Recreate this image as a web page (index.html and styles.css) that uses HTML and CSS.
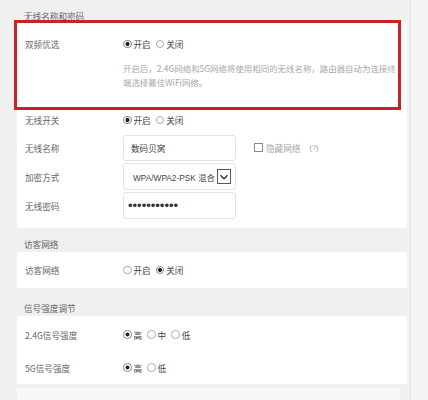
FILE: index.html
```html
<!DOCTYPE html>
<html lang="zh-CN">
<head>
<meta charset="utf-8">
<title>无线设置</title>
<link rel="stylesheet" href="styles.css">
</head>
<body>
<div class="page">
  <div class="main">
    <div class="sec-title first">无线名称和密码</div>
    <div class="card card-wifi">
      <div class="highlight">
        <div class="row row-top">
          <div class="label">双频优选</div>
          <div class="ctrl">
            <label class="opt"><input type="radio" name="dual" checked>开启</label>
            <label class="opt"><input type="radio" name="dual">关闭</label>
          </div>
        </div>
        <p class="desc">开启后，2.4G网络和5G网络将使用相同的无线名称，路由器自动为连接终端选择最佳WiFi网络。</p>
      </div>
      <div class="row h26">
        <div class="label">无线开关</div>
        <div class="ctrl">
          <label class="opt"><input type="radio" name="sw" checked>开启</label>
          <label class="opt"><input type="radio" name="sw">关闭</label>
        </div>
      </div>
      <div class="row h29">
        <div class="label">无线名称</div>
        <div class="ctrl">
          <div class="field">数码贝窝</div>
          <label class="hide"><input type="checkbox" class="chk">隐藏网络</label>
          <span class="help">(?)</span>
        </div>
      </div>
      <div class="row h29">
        <div class="label">加密方式</div>
        <div class="ctrl">
          <div class="field select"><span class="sel-text">WPA/WPA2-PSK 混合</span>
            <span class="arrow"><svg width="12" height="12" viewBox="0 0 12 12"><path d="M2.5 4.2 L6 7.8 L9.5 4.2" fill="none" stroke="#333" stroke-width="1.4"/></svg></span>
          </div>
        </div>
      </div>
      <div class="row h29">
        <div class="label">无线密码</div>
        <div class="ctrl">
          <div class="field pwd">•••••••••••</div>
        </div>
      </div>
    </div>

    <div class="sec-title second">访客网络</div>
    <div class="card">
      <div class="row h36">
        <div class="label">访客网络</div>
        <div class="ctrl">
          <label class="opt"><input type="radio" name="guest">开启</label>
          <label class="opt"><input type="radio" name="guest" checked>关闭</label>
        </div>
      </div>
    </div>

    <div class="sec-title third">信号强度调节</div>
    <div class="card card-signal">
      <div class="row h33">
        <div class="label">2.4G信号强度</div>
        <div class="ctrl">
          <label class="opt"><input type="radio" name="s24" checked>高</label>
          <label class="opt"><input type="radio" name="s24">中</label>
          <label class="opt"><input type="radio" name="s24">低</label>
        </div>
      </div>
      <div class="row h33">
        <div class="label">5G信号强度</div>
        <div class="ctrl">
          <label class="opt"><input type="radio" name="s5" checked>高</label>
          <label class="opt"><input type="radio" name="s5">低</label>
        </div>
      </div>
    </div>
    <div class="next-block"></div>
  </div>
  <div class="rail"></div>
</div>
</body>
</html>
```

FILE: styles.css
```css
html, body {
  margin: 0;
  padding: 0;
}
body {
  background: #f0f0f0;
  font-family: "Noto Sans CJK SC", "Liberation Sans", sans-serif;
  font-size: 8.6px;
  color: #555;
  overflow: hidden;
}
.page {
  display: flex;
  height: 400px;
}
.main {
  width: 390px;
  padding-left: 17px;
  padding-right: 3px;
}
.rail {
  flex: 1;
  background: #f4f4f4;
  border-left: 1px solid #e6e6e6;
}
.sec-title {
  padding-left: 7px;
  line-height: 12px;
  color: #666;
}
.sec-title.first { padding-top: 10px; }
.sec-title.second { padding-top: 10px; padding-bottom: 2px; }
.sec-title.third { padding-top: 14px; padding-bottom: 2px; }
.card {
  background: #fff;
  width: 390px;
}
.card-wifi { padding-bottom: 8px; }
.card-signal { padding-top: 2px; padding-bottom: 0; }
.highlight {
  position: relative;
  padding-top: 16px;
  padding-bottom: 18px;
}
.highlight::after {
  content: "";
  position: absolute;
  left: -3px;
  top: -2px;
  width: 387px;
  height: 90px;
  border: 3px solid #c9212b;
  box-sizing: border-box;
}
.row {
  display: flex;
  align-items: center;
  padding-left: 8px;
}
.row-top { height: 12px; }
.h26 { height: 26px; }
.h29 { height: 29px; }
.h33 { height: 33px; }
.h36 { height: 36px; }
.label {
  width: 98px;
  color: #666;
  white-space: nowrap;
}
.ctrl {
  display: flex;
  align-items: center;
  color: #444;
}
.opt {
  display: flex;
  align-items: center;
  margin-right: 5px;
}
input[type="radio"] {
  appearance: none;
  -webkit-appearance: none;
  width: 8.5px;
  height: 8.5px;
  margin: 0 2px 0 0;
  border: 1px solid #aaa;
  border-radius: 50%;
  background: #fff;
  box-sizing: border-box;
}
input[type="radio"]:checked {
  border-color: #888;
  background: radial-gradient(circle, #222 0, #222 1.7px, #fff 2.3px);
}
.desc {
  margin: 11px 0 0 106px;
  width: 273px;
  line-height: 14px;
  font-size: 8.45px;
  color: #a8a8a8;
}
.field {
  width: 113px;
  height: 26px;
  box-sizing: border-box;
  border: 1px solid #e2e2e2;
  border-radius: 3px;
  display: flex;
  align-items: center;
  padding-left: 7px;
  color: #444;
}
.select {
  padding-left: 9px;
  padding-right: 4px;
  height: 27px;
  font-family: "Liberation Sans", "Noto Sans CJK SC", sans-serif;
  font-size: 8.3px;
}
.sel-text { white-space: nowrap; }
.arrow {
  margin-left: auto;
  width: 14px;
  height: 15px;
  box-sizing: border-box;
  border: 1px solid #555;
  display: flex;
  align-items: center;
  justify-content: center;
  background: #fff;
}
.pwd {
  font-family: "Liberation Sans", sans-serif;
  font-size: 13px;
  padding-left: 4px;
  color: #333;
  height: 27px;
}
.hide {
  display: flex;
  align-items: center;
  margin-left: 18px;
  color: #aaa;
}
.chk {
  appearance: none;
  -webkit-appearance: none;
  width: 9px;
  height: 9px;
  margin: 0 3px 0 0;
  border: 1px solid #888;
  background: #fff;
  box-sizing: border-box;
}
.help {
  margin-left: 9px;
  color: #999;
  font-size: 7.5px;
  font-family: "Liberation Sans", sans-serif;
}
.next-block {
  margin-top: 4px;
  width: 383px;
  height: 12px;
  background: #f7f7f7;
}
```
